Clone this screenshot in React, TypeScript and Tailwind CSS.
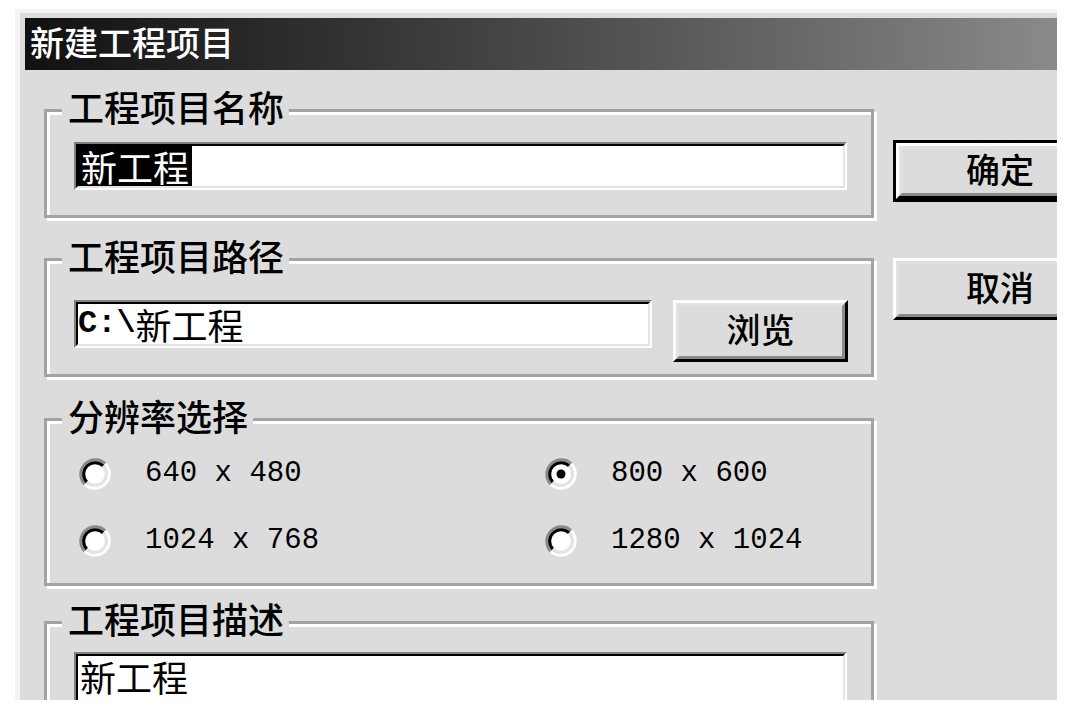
import React from "react";

const cjk = "font-['Noto_Sans_CJK_SC','Noto_Sans_CJK_JP',sans-serif]";
const mono = "font-['Liberation_Mono','DejaVu_Sans_Mono',monospace]";

function Group({
  label,
  className,
  children,
}: {
  label: string;
  className: string;
  children?: React.ReactNode;
}) {
  return (
    <div
      className={`relative w-[830px] border-[3px] border-[#a3a3a3] shadow-[inset_3px_3px_0_#ffffff,3px_3px_0_#ffffff] ${className}`}
    >
      <div
        className={`absolute left-[15px] -top-[26px] bg-[#dcdcdc] pl-[6px] pr-[5px] text-[36px] leading-[40px] font-medium text-black whitespace-nowrap ${cjk}`}
      >
        {label}
      </div>
      {children}
    </div>
  );
}

function Sunken({ className, children }: { className: string; children?: React.ReactNode }) {
  return (
    <div
      className={`border-2 border-t-[#808080] border-l-[#808080] border-b-white border-r-white ${className}`}
    >
      <div className="h-full border-2 border-t-black border-l-black border-b-[#e4e4e4] border-r-[#e4e4e4] bg-white flex items-center">
        {children}
      </div>
    </div>
  );
}

function Raised({ className, children }: { className: string; children?: React.ReactNode }) {
  return (
    <div
      className={`border-[3px] border-t-white border-l-white border-b-black border-r-black ${className}`}
    >
      <div
        className={`h-full border-[3px] border-t-[#e2e2e2] border-l-[#e2e2e2] border-b-[#8a8a8a] border-r-[#8a8a8a] flex items-center justify-center pb-[4px] text-[34px] leading-[40px] font-medium text-black ${cjk}`}
      >
        {children}
      </div>
    </div>
  );
}

function Radio({ checked }: { checked?: boolean }) {
  return (
    <svg width="32" height="32" viewBox="0 0 32 32" className="shrink-0">
      <circle cx="16" cy="16" r="11" fill="#ffffff" />
      <path d="M5.75 26.25 A14.5 14.5 0 0 1 26.25 5.75" fill="none" stroke="#8a8a8a" strokeWidth="3" />
      <path d="M26.25 5.75 A14.5 14.5 0 0 1 5.75 26.25" fill="none" stroke="#ffffff" strokeWidth="3" />
      <path d="M7.87 24.13 A11.5 11.5 0 0 1 24.13 7.87" fill="none" stroke="#000000" strokeWidth="3" />
      <path d="M24.13 7.87 A11.5 11.5 0 0 1 7.87 24.13" fill="none" stroke="#e4e4e4" strokeWidth="3" />
      {checked ? <circle cx="16" cy="16" r="4.5" fill="#000000" /> : null}
    </svg>
  );
}

function RadioItem({ label, checked }: { label: string; checked?: boolean }) {
  return (
    <div className="flex items-center gap-[34px] h-[32px]">
      <Radio checked={checked} />
      <span className={`text-[29px] leading-[32px] text-black whitespace-pre ${mono}`}>{label}</span>
    </div>
  );
}

export default function App() {
  return (
    <div className="w-[1071px] h-[708px] bg-white overflow-hidden pt-[9px] pl-[15px]">
      <div className="w-[1042px] h-[691px] bg-[#dcdcdc] border-t-[4px] border-l-[5px] border-[#f3f3f3] pt-[5px] pl-[5px] overflow-hidden">
        {/* Title bar */}
        <div className="h-[52px] bg-gradient-to-r from-[#111111] to-[#8a8a8a] flex items-center pl-[5px] pb-[5px]">
          <span className={`text-white text-[34px] leading-[40px] font-medium ${cjk}`}>新建工程项目</span>
        </div>

        {/* Body */}
        <div className="flex items-start">
          {/* Left column */}
          <div className="ml-[19px] flex flex-col">
            <Group label="工程项目名称" className="mt-[39px] h-[109px] pl-[27px] pt-[30px]">
              <Sunken className="w-[773px] h-[48px]">
                <span
                  className={`bg-black text-white text-[36px] leading-[40px] h-[40px] px-[3px] ${cjk}`}
                >
                  新工程
                </span>
              </Sunken>
            </Group>

            <Group label="工程项目路径" className="mt-[40px] h-[119px] pl-[27px] pt-[39px]">
              <div className="flex items-start gap-[21px]">
                <Sunken className="w-[578px] h-[48px]">
                  <span className="flex items-center">
                    <span className={`text-[32px] leading-[40px] font-bold text-black ${mono}`}>C:\</span>
                    <span className={`text-[36px] leading-[40px] text-black ${cjk}`}>新工程</span>
                  </span>
                </Sunken>
                <Raised className="w-[175px] h-[62px]">浏览</Raised>
              </div>
            </Group>

            <Group label="分辨率选择" className="mt-[41px] h-[168px] pl-[32px] pt-[37px]">
              <div className="grid grid-cols-[466px_1fr] gap-y-[35px]">
                <RadioItem label="640 x 480" />
                <RadioItem label="800 x 600" checked />
                <RadioItem label="1024 x 768" />
                <RadioItem label="1280 x 1024" />
              </div>
            </Group>

            <Group label="工程项目描述" className="mt-[35px] h-[200px] pl-[27px] pt-[28px]">
              <Sunken className="w-[773px] h-[120px]">
                <span className="self-start">
                  <span className={`block pl-[2px] text-[36px] leading-[40px] text-black ${cjk}`}>新工程</span>
                </span>
              </Sunken>
            </Group>
          </div>

          {/* Right column */}
          <div className="ml-[19px] flex flex-col shrink-0">
            <div className="mt-[70px] w-[214px] h-[62px] border-[3px] border-black">
              <Raised className="w-full h-full">确定</Raised>
            </div>
            <Raised className="mt-[56px] w-[214px] h-[62px]">取消</Raised>
          </div>
        </div>
      </div>
    </div>
  );
}
